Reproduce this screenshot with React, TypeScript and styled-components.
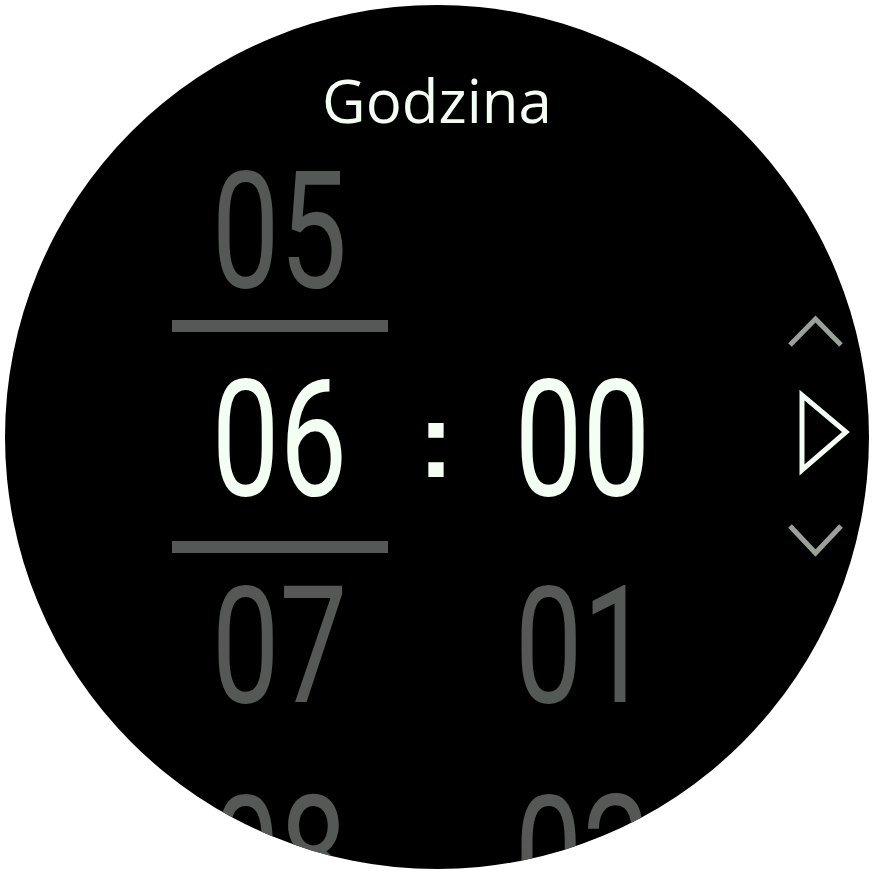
import styled, { createGlobalStyle } from "styled-components";

const Global = createGlobalStyle`
  html, body {
    margin: 0;
    padding: 0;
    background: #ffffff;
  }
`

const Stage = styled.div`
  width: 872px;
  height: 872px;
  box-sizing: border-box;
  padding: 5px 0 0 5px;
  background: #ffffff;
`

const Face = styled.div`
  position: relative;
  width: 864px;
  height: 864px;
  border-radius: 50%;
  background: #000000;
  overflow: hidden;
  display: flex;
  flex-direction: column;
  align-items: center;
`

const Title = styled.div`
  margin-top: 65px;
  font-family: "Open Sans", "Noto Sans", sans-serif;
  font-size: 60px;
  line-height: 60px;
  font-weight: 400;
  color: #f4fff4;
`

const Wheel = styled.div`
  align-self: flex-start;
  margin-left: 167px;
  display: flex;
  flex-direction: column;
`

const Row = styled.div<{ $gap: number }>`
  display: grid;
  grid-template-columns: 216px 87px 216px;
  margin-top: ${p => p.$gap}px;
`

const Cell = styled.div<{ $active?: boolean }>`
  height: 116px;
  line-height: 116px;
  font-family: Roboto, "Liberation Sans", sans-serif;
  font-size: 163px;
  font-weight: 400;
  text-align: center;
  color: ${p => (p.$active ? "#f4fff4" : "#555955")};
  white-space: nowrap;
`

const Digits = styled.span`
  display: inline-block;
  transform: scaleX(0.74);
`

const Colon = styled.div`
  height: 116px;
  line-height: 116px;
  font-family: "Liberation Sans", Arial, sans-serif;
  font-size: 108px;
  font-weight: 700;
  text-align: center;
  padding-left: 9px;
  color: #f4fff4;
`

const Divider = styled.div`
  height: 12px;
  background: #555955;
`

/* hints for the physical side buttons, sitting on the bezel edge */
const ButtonHints = styled.svg`
  position: absolute;
  left: 770px;
  top: 300px;
`

const Chevron = styled.polyline`
  fill: none;
  stroke: #99a299;
  stroke-width: 5;
`

const Play = styled.polygon`
  fill: none;
  stroke: #f4fff4;
  stroke-width: 5;
  stroke-linejoin: miter;
`

type PickRow = { gap: number; hour: string; minute?: string; active?: boolean }

const rows: PickRow[] = [
  { gap: 44, hour: "05" },
  { gap: 50, hour: "06", minute: "00", active: true },
  { gap: 36, hour: "07", minute: "01" },
  { gap: 93, hour: "08", minute: "02" },
]

const App = () => {
  return <>
    <Global />
    <Stage>
      <Face>
        <Title>Godzina</Title>
        <Wheel>
          {rows.map((r, i) => (
            <div key={r.hour}>
              {i === 1 && <Row $gap={30}><Divider /></Row>}
              {i === 2 && <Row $gap={43}><Divider /></Row>}
              <Row $gap={r.gap}>
                <Cell $active={r.active}><Digits>{r.hour}</Digits></Cell>
                {r.active ? <Colon>:</Colon> : <div />}
                <Cell $active={r.active}>{r.minute && <Digits>{r.minute}</Digits>}</Cell>
              </Row>
            </div>
          ))}
        </Wheel>
        <ButtonHints width="80" height="260" viewBox="0 0 80 260">
          <Chevron points="15,40 40.5,14 66,40" />
          <Play points="27,90 27,165 71,127" />
          <Chevron points="15,221 40.5,248 66,221" />
        </ButtonHints>
      </Face>
    </Stage>
  </>
}

export default App;
